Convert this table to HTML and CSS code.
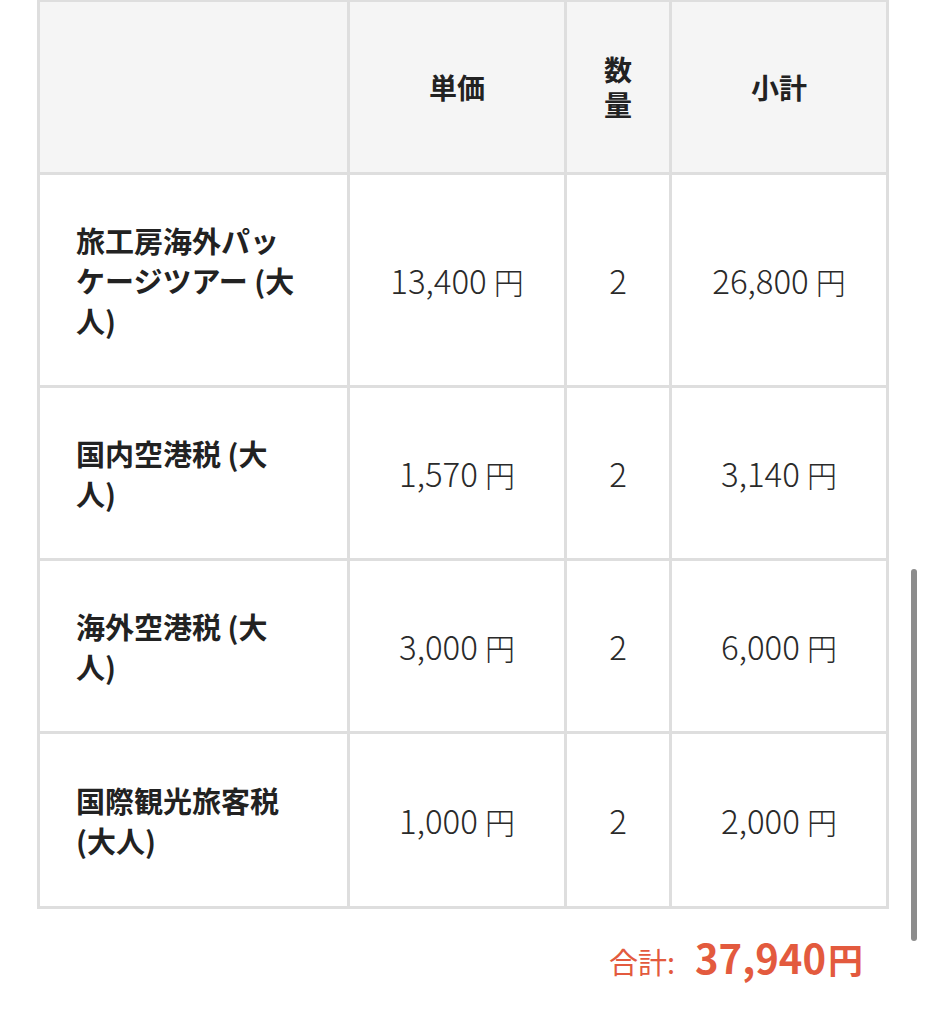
FILE: index.html
```html
<!DOCTYPE html>
<html lang="ja">
<head>
<meta charset="utf-8">
<title>料金明細</title>
<link rel="stylesheet" href="styles.css">
</head>
<body>
<div class="page">
  <table class="price-table">
    <colgroup>
      <col class="col-item">
      <col class="col-price">
      <col class="col-qty">
      <col class="col-sub">
    </colgroup>
    <thead>
      <tr>
        <th class="head-item"></th>
        <th>単価</th>
        <th>数量</th>
        <th>小計</th>
      </tr>
    </thead>
    <tbody>
      <tr>
        <td class="item">旅工房海外パッケージツアー (大人)</td>
        <td class="num">13,400<span class="yen">円</span></td>
        <td class="num">2</td>
        <td class="num">26,800<span class="yen">円</span></td>
      </tr>
      <tr>
        <td class="item">国内空港税 (大人)</td>
        <td class="num">1,570<span class="yen">円</span></td>
        <td class="num">2</td>
        <td class="num">3,140<span class="yen">円</span></td>
      </tr>
      <tr>
        <td class="item">海外空港税 (大人)</td>
        <td class="num">3,000<span class="yen">円</span></td>
        <td class="num">2</td>
        <td class="num">6,000<span class="yen">円</span></td>
      </tr>
      <tr class="last-row">
        <td class="item">国際観光旅客税 (大人)</td>
        <td class="num">1,000<span class="yen">円</span></td>
        <td class="num">2</td>
        <td class="num">2,000<span class="yen">円</span></td>
      </tr>
    </tbody>
  </table>
  <div class="total">
    <span class="total-label">合計:</span>
    <span class="total-value">37,940<span class="total-yen">円</span></span>
  </div>
</div>
<div class="scrollbar"></div>
</body>
</html>
```

FILE: styles.css
```css
html, body {
  margin: 0;
  padding: 0;
  background: #ffffff;
}

body {
  font-family: "Noto Sans CJK JP", "Noto Sans", sans-serif;
  color: #222222;
  overflow: hidden;
}

.page {
  padding: 0 38px 0 37px;
  margin-top: -1px;
}

.price-table {
  width: 852px;
  border-collapse: collapse;
  table-layout: fixed;
}

.col-item { width: 310px; }
.col-price { width: 217px; }
.col-qty { width: 105px; }
.col-sub { width: 217px; }

.price-table th,
.price-table td {
  border: 3px solid #dedede;
  vertical-align: middle;
}

.price-table th {
  background: #f5f5f5;
  font-size: 28px;
  font-weight: 700;
  line-height: 35px;
  text-align: center;
  padding: 50px 36px;
  color: #222222;
}

.price-table td {
  padding: 45px 45px 45px 36px;
  line-height: 40px;
}

.price-table .last-row td {
  padding-top: 46px;
  padding-bottom: 46px;
}

.item {
  font-size: 29px;
  font-weight: 700;
  text-align: left;
  color: #222222;
}

.price-table td.num {
  font-size: 33px;
  font-weight: 300;
  text-align: center;
  color: #2a2a2a;
  padding-left: 6px;
  padding-right: 6px;
}

.yen {
  margin-left: 7px;
  font-size: 30px;
}

.total {
  display: flex;
  justify-content: flex-end;
  align-items: baseline;
  gap: 20px;
  padding: 19px 26px 0 0;
  color: #e35a3e;
}

.total-label {
  font-size: 29px;
  font-weight: 400;
}

.total-value {
  font-size: 40px;
  font-weight: 700;
}

.total-yen {
  font-size: 35px;
  margin-left: 2px;
}

.scrollbar {
  position: fixed;
  left: 911px;
  top: 569px;
  width: 6px;
  height: 372px;
  border-radius: 3px;
  background: #8c8c8c;
}
```
